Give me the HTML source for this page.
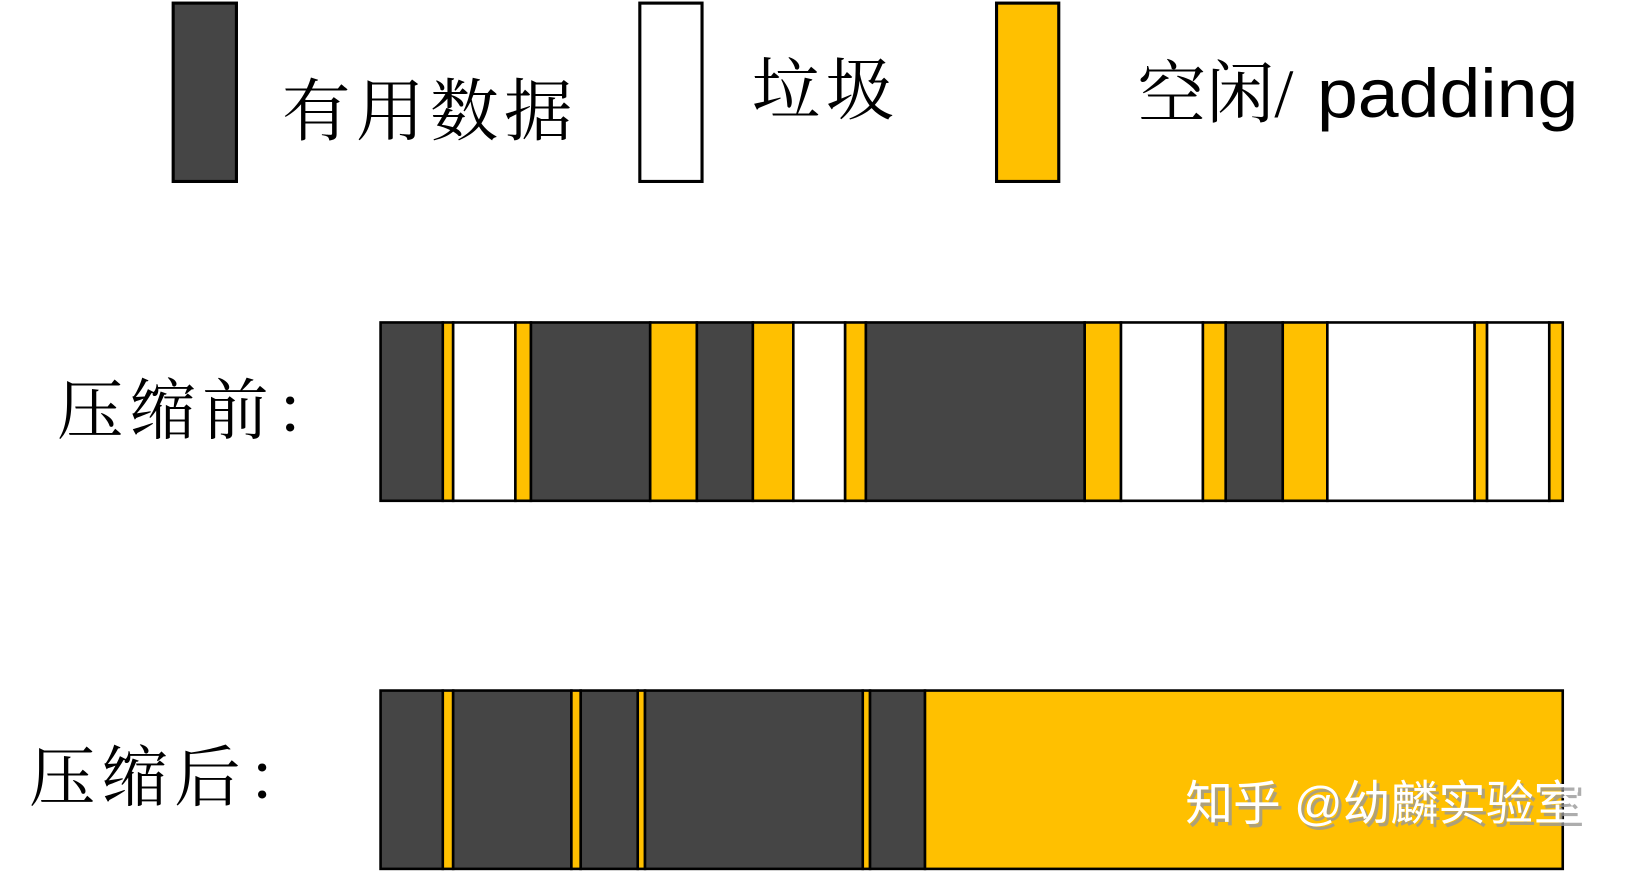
<!DOCTYPE html>
<html><head><meta charset="utf-8"><style>html,body{margin:0;padding:0;background:#fff;width:1626px;height:872px;overflow:hidden}</style></head>
<body>
<svg width="1626" height="872" viewBox="0 0 1568 841" xmlns="http://www.w3.org/2000/svg" preserveAspectRatio="none">
<g stroke="#000" stroke-width="3">
<rect x="167" y="3" width="61" height="172" fill="#454545"/>
<rect x="617" y="3" width="60" height="172" fill="#fff"/>
<rect x="961" y="3" width="60" height="172" fill="#ffc000"/>
</g>
<g font-family="'Liberation Serif','Noto Serif CJK SC',serif" font-size="66" fill="#000">
<text x="272" y="130" textLength="280" lengthAdjust="spacing">有用数据</text>
<text x="725" y="110" textLength="137" lengthAdjust="spacing">垃圾</text>
<text x="1097" y="113">空闲/</text>
<text x="1270" y="113" font-family="'Liberation Sans Narrow','Liberation Sans','DejaVu Sans',sans-serif" font-size="66" textLength="252" lengthAdjust="spacingAndGlyphs">padding</text>
</g>
<g font-family="'Noto Serif CJK SC',serif" font-size="64" fill="#000">
<text x="55" y="418" letter-spacing="6">压缩前：</text>
<text x="28" y="772" letter-spacing="6">压缩后：</text>
</g>
<g stroke="#000" stroke-width="2.5">
<rect x="367" y="311" width="60" height="172" fill="#454545"/>
<rect x="427" y="311" width="10" height="172" fill="#ffc000"/>
<rect x="437" y="311" width="60" height="172" fill="#fff"/>
<rect x="497" y="311" width="15" height="172" fill="#ffc000"/>
<rect x="512" y="311" width="115" height="172" fill="#454545"/>
<rect x="627" y="311" width="45" height="172" fill="#ffc000"/>
<rect x="672" y="311" width="54" height="172" fill="#454545"/>
<rect x="726" y="311" width="39" height="172" fill="#ffc000"/>
<rect x="765" y="311" width="50" height="172" fill="#fff"/>
<rect x="815" y="311" width="20" height="172" fill="#ffc000"/>
<rect x="835" y="311" width="211" height="172" fill="#454545"/>
<rect x="1046" y="311" width="35" height="172" fill="#ffc000"/>
<rect x="1081" y="311" width="79" height="172" fill="#fff"/>
<rect x="1160" y="311" width="22" height="172" fill="#ffc000"/>
<rect x="1182" y="311" width="55" height="172" fill="#454545"/>
<rect x="1237" y="311" width="43" height="172" fill="#ffc000"/>
<rect x="1280" y="311" width="142" height="172" fill="#fff"/>
<rect x="1422" y="311" width="12" height="172" fill="#ffc000"/>
<rect x="1434" y="311" width="60" height="172" fill="#fff"/>
<rect x="1494" y="311" width="13" height="172" fill="#ffc000"/>

<rect x="367" y="666" width="60" height="172" fill="#454545"/>
<rect x="427" y="666" width="10" height="172" fill="#ffc000"/>
<rect x="437" y="666" width="114" height="172" fill="#454545"/>
<rect x="551" y="666" width="9" height="172" fill="#ffc000"/>
<rect x="560" y="666" width="55" height="172" fill="#454545"/>
<rect x="615" y="666" width="7" height="172" fill="#ffc000"/>
<rect x="622" y="666" width="210" height="172" fill="#454545"/>
<rect x="832" y="666" width="7" height="172" fill="#ffc000"/>
<rect x="839" y="666" width="53" height="172" fill="#454545"/>
<rect x="892" y="666" width="615" height="172" fill="#ffc000"/>
</g>
<g font-family="'Liberation Sans','Noto Sans CJK SC',sans-serif" font-size="46">
<text x="1146" y="794" fill="#999" opacity="0.8" textLength="382" lengthAdjust="spacingAndGlyphs">知乎 @幼麟实验室</text>
<text x="1143" y="791" fill="#fff" textLength="382" lengthAdjust="spacingAndGlyphs">知乎 @幼麟实验室</text>
</g>
</svg>
</body></html>
